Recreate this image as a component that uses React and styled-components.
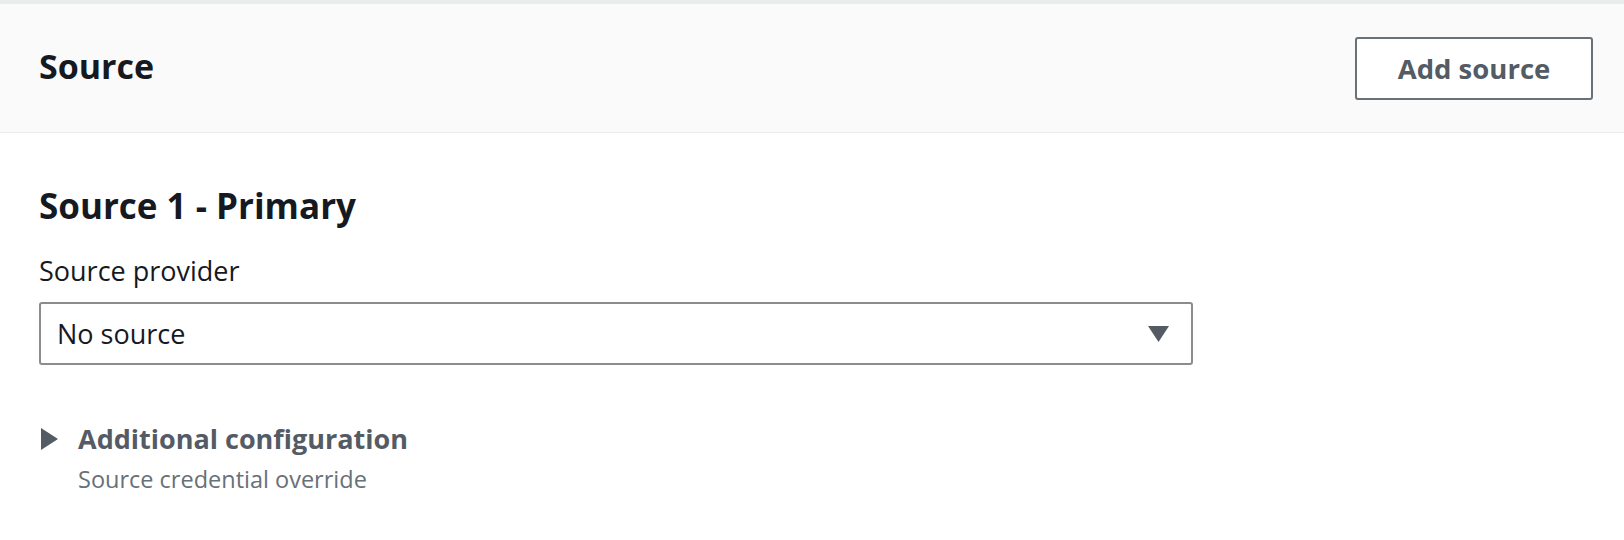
import styled, { createGlobalStyle } from "styled-components";

const GlobalStyle = createGlobalStyle`
  body {
    margin: 0;
    background: #ffffff;
    font-family: "Open Sans", "Noto Sans", sans-serif;
    color: #16191f;
  }
`;

const Panel = styled.div`
  border-top: 4px solid #eaeded;
  background: #ffffff;
  min-height: 536px;
`;

const Header = styled.div`
  display: flex;
  align-items: center;
  justify-content: space-between;
  height: 128px;
  padding: 0 31px 0 39px;
  background: #fafafa;
  border-bottom: 1px solid #eaeded;
`;

const Title = styled.h2`
  margin: 0 0 4px 0;
  font-size: 34px;
  font-weight: 700;
  color: #16191f;
`;

const OutlineButton = styled.button`
  width: 238px;
  height: 63px;
  border: 2px solid #687078;
  border-radius: 3px;
  background: #ffffff;
  color: #545b64;
  font-family: inherit;
  font-size: 27.5px;
  font-weight: 700;
  cursor: pointer;
`;

const Body = styled.div`
  padding: 49px 39px 0 39px;
`;

const SectionTitle = styled.h3`
  margin: 0;
  font-size: 35px;
  font-weight: 700;
  line-height: 48px;
`;

const Label = styled.label`
  display: block;
  margin-top: 22px;
  font-size: 27px;
  line-height: 38px;
`;

const Select = styled.div`
  display: flex;
  align-items: center;
  justify-content: space-between;
  box-sizing: border-box;
  width: 1154px;
  height: 63px;
  margin-top: 12px;
  padding: 0 22px 0 16px;
  border: 2px solid #8c8c8c;
  border-radius: 3px;
  font-size: 27px;
`;

const Expander = styled.div`
  display: flex;
  align-items: flex-start;
  gap: 20px;
  margin-top: 56px;
  padding-left: 2px;
`;

const ExpandHeading = styled.div`
  font-size: 27px;
  font-weight: 700;
  color: #545b64;
  line-height: 36px;
`;

const Description = styled.div`
  font-size: 23.5px;
  color: #687078;
  line-height: 34px;
  margin-top: 5px;
`;

const Caret = ({ dir }) =>
  dir === "down" ? (
    <svg width="21" height="16" viewBox="0 0 21 16">
      <path d="M0 0 H21 L10.5 16 Z" fill="#545b64" />
    </svg>
  ) : (
    <svg width="17" height="22" viewBox="0 0 17 22" style={{ marginTop: 7, flexShrink: 0 }}>
      <path d="M0 0 L17 11 L0 22 Z" fill="#545b64" />
    </svg>
  );

export default function App() {
  return (
    <>
      <GlobalStyle />
      <Panel>
        <Header>
          <Title>Source</Title>
          <OutlineButton>Add source</OutlineButton>
        </Header>
        <Body>
          <SectionTitle>Source 1 - Primary</SectionTitle>
          <Label>Source provider</Label>
          <Select>
            <span>No source</span>
            <Caret dir="down" />
          </Select>
          <Expander>
            <Caret dir="right" />
            <div>
              <ExpandHeading>Additional configuration</ExpandHeading>
              <Description>Source credential override</Description>
            </div>
          </Expander>
        </Body>
      </Panel>
    </>
  );
}
